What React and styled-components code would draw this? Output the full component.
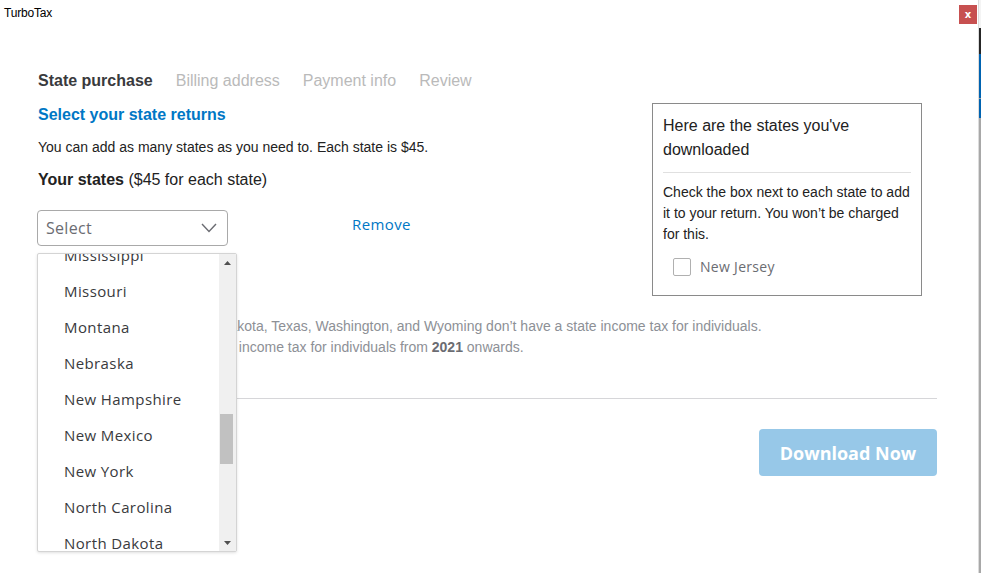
import styled, { createGlobalStyle } from "styled-components";

const GlobalStyle = createGlobalStyle`
  html, body {
    margin: 0;
    padding: 0;
    background: #ffffff;
  }
  body {
    font-family: "Liberation Sans", Arial, sans-serif;
    overflow: hidden;
  }
`;

const states = [
  "Mississippi",
  "Missouri",
  "Montana",
  "Nebraska",
  "New Hampshire",
  "New Mexico",
  "New York",
  "North Carolina",
  "North Dakota",
];

const tabs = ["State purchase", "Billing address", "Payment info", "Review"];

const App = () => {
  return (
    <Screen>
      <GlobalStyle />
      <Window>
        <TitleBar>
          <AppName>TurboTax</AppName>
          <CloseButton>x</CloseButton>
        </TitleBar>
        <Content>
          <Tabs>
            {tabs.map((t, i) => (
              <Tab key={t} $active={i === 0}>
                {t}
              </Tab>
            ))}
          </Tabs>
          <Body>
            <LeftColumn>
              <Heading>Select your state returns</Heading>
              <Intro>You can add as many states as you need to. Each state is $45.</Intro>
              <YourStates>
                <strong>Your states</strong> ($45 for each state)
              </YourStates>
              <SelectRow>
                <SelectBox>
                  <span>Select</span>
                  <svg width="16" height="10" viewBox="0 0 16 10">
                    <polyline
                      points="1,1 8,8.5 15,1"
                      fill="none"
                      stroke="#6b6c72"
                      strokeWidth="1.4"
                    />
                  </svg>
                </SelectBox>
                <RemoveLink>Remove</RemoveLink>
                <Dropdown>
                  <OptionList>
                    {states.map((s) => (
                      <Option key={s}>{s}</Option>
                    ))}
                  </OptionList>
                  <Scrollbar>
                    <ArrowButton>
                      <svg width="7" height="4" viewBox="0 0 7 4">
                        <polygon points="0,4 3.5,0 7,4" fill="#505050" />
                      </svg>
                    </ArrowButton>
                    <Track>
                      <Thumb />
                    </Track>
                    <ArrowButton>
                      <svg width="7" height="4" viewBox="0 0 7 4">
                        <polygon points="0,0 3.5,4 7,0" fill="#505050" />
                      </svg>
                    </ArrowButton>
                  </Scrollbar>
                </Dropdown>
              </SelectRow>
              <Disclaimer>
                Alaska, Florida, Nevada, So. Dakota, Texas, Washington, and Wyoming
                don’t have a state income tax for individuals.
                <br />
                Tennessee doesn’t have a state income tax for individuals from{" "}
                <strong>2021</strong> onwards.
              </Disclaimer>
            </LeftColumn>
            <Card>
              <CardTitle>Here are the states you've downloaded</CardTitle>
              <CardDivider />
              <CardText>
                Check the box next to each state to add it to your return. You won’t
                be charged for this.
              </CardText>
              <CheckRow>
                <CheckBox />
                <CheckLabel>New Jersey</CheckLabel>
              </CheckRow>
            </Card>
          </Body>
          <Divider />
          <Footer>
            <DownloadButton disabled>Download Now</DownloadButton>
          </Footer>
        </Content>
      </Window>
      <DesktopEdge>
        <EdgeSegment $color="#f4f4f4" $h={28} />
        <EdgeSegment $color="#262626" $h={26} />
        <EdgeSegment $color="#0063b1" $h={44} />
        <EdgeSegment $color="#a0a0a0" $h={1} />
        <EdgeSegment $color="#0063b1" $h={19} />
        <EdgeSegment $color="#a8a8a8" $h={455} />
      </DesktopEdge>
    </Screen>
  );
};

export default App;

const Screen = styled.div`
  display: flex;
  width: 981px;
  height: 573px;
  overflow: hidden;
`;

const Window = styled.div`
  width: 978px;
  height: 573px;
  background: #fff;
  border-right: 1px solid #dcdcdc;
  display: flex;
  flex-direction: column;
`;

const DesktopEdge = styled.div`
  width: 2px;
  display: flex;
  flex-direction: column;
`;

const EdgeSegment = styled.div`
  height: ${(p) => p.$h}px;
  background: ${(p) => p.$color};
  flex-shrink: 0;
`;

const TitleBar = styled.div`
  height: 28px;
  display: flex;
  align-items: flex-start;
  justify-content: space-between;
  padding: 5px 1px 0 4px;
  box-sizing: border-box;
`;

const AppName = styled.div`
  font-family: "Liberation Sans", Arial, sans-serif;
  font-size: 12px;
  letter-spacing: -0.2px;
  color: #000;
  margin-top: 1px;
`;

const CloseButton = styled.div`
  width: 18px;
  height: 19px;
  background: #c75050;
  color: #fff;
  font-family: "DejaVu Sans", sans-serif;
  font-size: 10px;
  font-weight: bold;
  display: flex;
  align-items: center;
  justify-content: center;
`;

const Content = styled.div`
  padding: 43px 41px 0 38px;
  display: flex;
  flex-direction: column;
`;

const Tabs = styled.div`
  display: flex;
  gap: 23px;
  height: 20px;
  align-items: center;
`;

const Tab = styled.div`
  font-size: 16px;
  font-weight: ${(p) => (p.$active ? "bold" : "normal")};
  color: ${(p) => (p.$active ? "#393a3d" : "#bababa")};
`;

const Body = styled.div`
  display: flex;
  justify-content: space-between;
  align-items: flex-start;
  margin-top: 12px;
`;

const LeftColumn = styled.div`
  display: flex;
  flex-direction: column;
  flex: 1;
  min-width: 0;
  padding-top: 1px;
`;

const Heading = styled.div`
  font-size: 16px;
  font-weight: bold;
  line-height: 22px;
  color: #0077c5;
`;

const Intro = styled.div`
  font-size: 14px;
  line-height: 20px;
  color: #222;
  margin-top: 11px;
`;

const YourStates = styled.div`
  font-size: 16px;
  line-height: 22px;
  color: #222;
  margin-top: 12px;
  strong {
    font-weight: bold;
  }
`;

const SelectRow = styled.div`
  position: relative;
  display: flex;
  align-items: center;
  margin-top: 19px;
  margin-left: -1px;
`;

const SelectBox = styled.div`
  width: 191px;
  height: 36px;
  box-sizing: border-box;
  border: 1px solid #a9a9a9;
  border-radius: 4px;
  display: flex;
  align-items: center;
  justify-content: space-between;
  padding: 0 10px 0 8px;
  font-family: "Open Sans", sans-serif;
  font-size: 16px;
  color: #6b6c72;
  span {
    letter-spacing: 0.3px;
  }
`;

const RemoveLink = styled.div`
  margin-left: 124px;
  margin-top: -8px;
  font-family: "Open Sans", sans-serif;
  font-size: 15px;
  color: #0077c5;
  letter-spacing: 0.4px;
`;

const Dropdown = styled.div`
  position: absolute;
  top: 43px;
  left: 0;
  width: 200px;
  height: 299px;
  box-sizing: border-box;
  border: 1px solid #d4d4d4;
  border-radius: 2px;
  background: #fff;
  box-shadow: 0 1px 3px rgba(0, 0, 0, 0.12);
  display: flex;
  z-index: 5;
  overflow: hidden;
`;

const OptionList = styled.div`
  flex: 1;
  margin-top: -17px;
`;

const Option = styled.div`
  height: 36px;
  display: flex;
  align-items: center;
  padding-left: 26px;
  font-family: "Open Sans", sans-serif;
  font-size: 15px;
  letter-spacing: 0.4px;
  color: #393a3d;
`;

const Scrollbar = styled.div`
  width: 17px;
  background: #f0f0f0;
  display: flex;
  flex-direction: column;
`;

const ArrowButton = styled.div`
  height: 17px;
  display: flex;
  align-items: center;
  justify-content: center;
`;

const Track = styled.div`
  flex: 1;
  display: flex;
  flex-direction: column;
  align-items: center;
`;

const Thumb = styled.div`
  width: 13px;
  height: 50px;
  background: #c1c1c1;
  margin-top: 143px;
  margin-left: -2px;
`;

const Disclaimer = styled.div`
  font-size: 14px;
  line-height: 21px;
  color: #8d9096;
  margin-top: 70px;
  white-space: nowrap;
  strong {
    color: #6b6c72;
  }
`;

const Card = styled.div`
  width: 270px;
  flex-shrink: 0;
  box-sizing: border-box;
  border: 1px solid #8a8a8a;
  padding: 10px 10px 19px 10px;
  margin-right: 15px;
  position: relative;
  z-index: 1;
  background: #fff;
`;

const CardTitle = styled.div`
  font-size: 16px;
  line-height: 24px;
  color: #222;
`;

const CardDivider = styled.div`
  height: 1px;
  background: #e0e0e0;
  margin: 10px 0 9px 0;
`;

const CardText = styled.div`
  font-size: 14px;
  line-height: 21px;
  color: #222;
`;

const CheckRow = styled.div`
  display: flex;
  align-items: center;
  margin-top: 12px;
  padding-left: 10px;
`;

const CheckBox = styled.div`
  width: 18px;
  height: 18px;
  box-sizing: border-box;
  border: 1px solid #b0b0b0;
  border-radius: 2px;
`;

const CheckLabel = styled.div`
  margin-left: 9px;
  font-family: "Open Sans", sans-serif;
  font-size: 14px;
  letter-spacing: 0.3px;
  color: #6b6c72;
`;

const Divider = styled.div`
  height: 1px;
  background: #d6d6d9;
  margin-top: 40px;
`;

const Footer = styled.div`
  display: flex;
  justify-content: flex-end;
  margin-top: 30px;
`;

const DownloadButton = styled.button`
  width: 178px;
  height: 47px;
  border: none;
  border-radius: 4px;
  background: #97c8e8;
  color: #fff;
  font-family: "Open Sans", sans-serif;
  font-size: 18px;
  font-weight: bold;
  padding: 0;
`;
